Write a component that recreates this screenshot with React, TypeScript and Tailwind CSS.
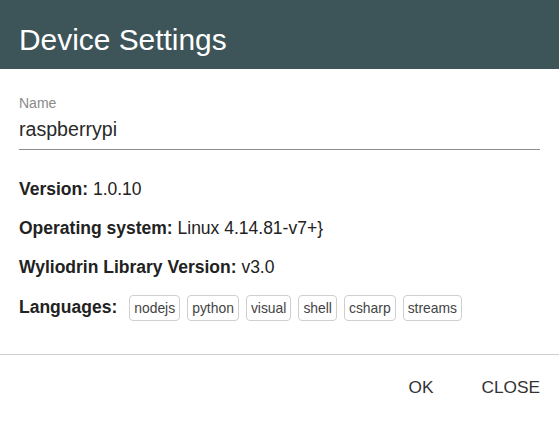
import React from 'react';

const languages = ['nodejs', 'python', 'visual', 'shell', 'csharp', 'streams'];

const App: React.FC = () => {
  return (
    <div
      className="w-[559px] h-[421px] bg-white overflow-hidden flex flex-col"
      style={{ fontFamily: '"Liberation Sans", Arial, sans-serif' }}
    >
      <div className="h-[69px] bg-[#3d5459] px-[19px] pt-[23px]">
        <h1 className="text-white text-[29.9px] leading-[34px]">Device Settings</h1>
      </div>

      <div className="px-[19px] pt-[26px]">
        <label className="block text-[14px] leading-[16px] text-[#8a8a8a]">Name</label>
        <div className="mt-[6px] pb-[8px] border-b border-[#8c8c8c] text-[19.6px] leading-[24px] text-[#2a2a2a]">
          raspberrypi
        </div>

        <div className="mt-[29px] text-[17.5px] leading-[20px] text-[#222]">
          <p>
            <span className="font-bold">Version:</span> 1.0.10
          </p>
          <p className="mt-[19px]">
            <span className="font-bold">Operating system:</span> Linux 4.14.81-v7+{'}'}
          </p>
          <p className="mt-[19px]">
            <span className="font-bold">Wyliodrin Library Version:</span> v3.0
          </p>
          <div className="mt-[19px] flex items-start">
            <span className="font-bold mt-[1px]">Languages:</span>
            <div className="ml-[12px] -mt-[1px] flex gap-[7px]">
              {languages.map(lang => (
                <span
                  key={lang}
                  className="h-[26px] px-[4px] flex items-center border border-[#cfcfcf] rounded-[4px] text-[13.9px] text-[#444]"
                >
                  {lang}
                </span>
              ))}
            </div>
          </div>
        </div>
      </div>

      <div className="mt-[33px] border-t border-[#cfcfcf] flex justify-end gap-[48px] pr-[19px] pt-[22px] text-[17.3px] leading-[20px] text-[#333]">
        <button>OK</button>
        <button>CLOSE</button>
      </div>
    </div>
  );
};

export default App;
